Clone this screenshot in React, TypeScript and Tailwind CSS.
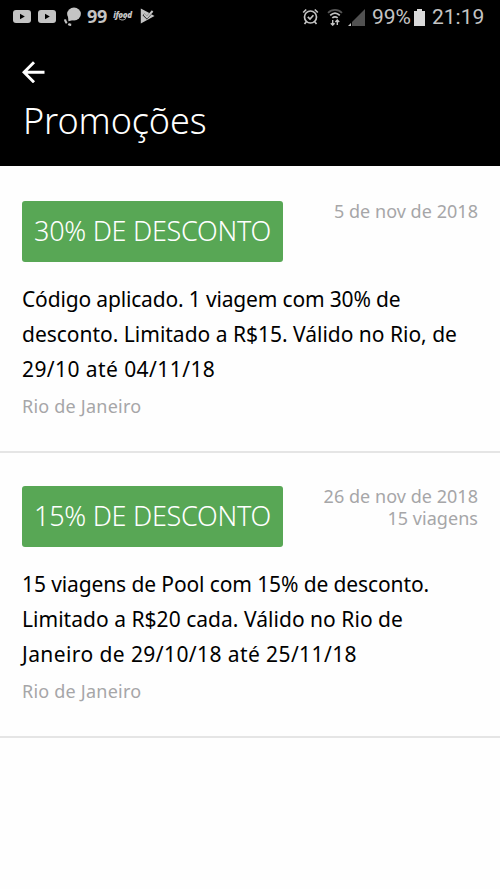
function PlayBadge() {
  return (
    <svg width="18" height="13" viewBox="0 0 18 13">
      <rect width="18" height="13" rx="3" fill="#c4c4c4" />
      <path d="M7 3.7v5.6l4.8-2.8z" fill="#000" />
    </svg>
  );
}

function StatusBar() {
  return (
    <div className="flex h-[34px] items-center pl-[13px] pr-[15px] text-[#c4c4c4]">
      <div className="flex items-center pb-[2px]">
        <PlayBadge />
        <span className="w-[7px]" />
        <PlayBadge />
        <svg className="ml-[8px]" width="17" height="19" viewBox="0 0 17 19">
          <ellipse cx="10" cy="7" rx="6.9" ry="6.5" fill="#c4c4c4" />
          <path d="M4 9l.4 5.300 6-1.500z" fill="#c4c4c4" />
          <path d="M1 12.400c.2 1.600.8 2.700 1.800 3.700M4.300 17c.9.500 1.800.8 2.900.9" fill="none" stroke="#c4c4c4" strokeWidth="2.200" />
        </svg>
        <span className="ml-[6px] w-[21px] text-[18px] leading-none font-bold tracking-[-0.4px]">99</span>
        <span className="ml-[5px] flex w-[19px] flex-col items-center">
          <span className="text-[8px] leading-[7px] font-black italic tracking-[-0.4px]">ifood</span>
          <svg width="9" height="3" viewBox="0 0 9 3">
            <path d="M1 .5c2 2 5 2 7-.3" fill="none" stroke="#c4c4c4" strokeWidth="1" />
          </svg>
        </span>
        <svg className="ml-[8px]" width="16" height="16" viewBox="0 0 16 16">
          <path d="M.8 .6v14.800l13.700-7.400-3-1.700-4.600 5.200L2.600 7.200l2-1.700 2.300 2.200 2.400-2.700z" fill="#c4c4c4" />
          <path d="M4 6.200l3 3L12.600 3" fill="none" stroke="#c4c4c4" strokeWidth="2" />
        </svg>
      </div>
      <div className="ml-auto flex items-center">
        <svg width="17" height="18" viewBox="0 0 17 18" fill="none" stroke="#c4c4c4" strokeWidth="1.700">
          <circle cx="8.500" cy="9" r="6" />
          <path d="M5.800 8.800l2.200 2.200 3.400-3.800M1.200 4.500l3-3M15.800 4.500l-3-3M4.500 13.500l-2 2.500M12.500 13.500l2 2.500" />
        </svg>
        <svg className="ml-[8px]" width="16" height="18" viewBox="0 0 16 18" fill="none" stroke="#c4c4c4" strokeWidth="1.700">
          <path d="M1 4.800c4-4 10-4 14 0" stroke="#555" />
          <path d="M3.200 7.300c3-2.800 6.600-2.800 9.600 0M5.300 9.900c1.800-1.500 3.600-1.500 5.400 0" />
          <path d="M5.700 12v5M3.800 15.200l1.900 1.900 1.900-1.900M10.300 17v-5M8.400 13.900l1.900-1.900 1.900 1.900" strokeWidth="1.400" />
        </svg>
        <svg className="ml-[5px]" width="17" height="17" viewBox="0 0 17 17">
          <path d="M17 0v17H4V13z" fill="#515151" />
          <path d="M3 14v3H0z" fill="#c4c4c4" />
        </svg>
        <span className="ml-[7px] w-[39px] whitespace-nowrap font-[Roboto] text-[21px] leading-none">99%</span>
        <svg className="ml-[3px]" width="11" height="17" viewBox="0 0 11 17">
          <path d="M3 0h5v2h3v15H0V2h3z" fill="#dadada" />
        </svg>
        <span className="ml-[7px] w-[53px] whitespace-nowrap font-[Roboto] text-[21px] leading-none">21:19</span>
      </div>
    </div>
  );
}

function Header() {
  return (
    <header className="h-[166px] bg-black text-white">
      <StatusBar />
      <button className="mt-[27px] ml-[22px] block" aria-label="Voltar">
        <svg width="23" height="22" viewBox="0 0 23 22" fill="none" stroke="#fff" strokeWidth="2.900">
          <path d="M22.500 11.300H2.500M12 1.300l-10 10 10 10" />
        </svg>
      </button>
      <h1 className="mt-[13px] ml-[23px] text-[36px] leading-[50px] font-light tracking-[-0.1px] whitespace-nowrap">
        Promoções
      </h1>
    </header>
  );
}

interface TextLine {
  text: string;
  tracking: string;
}

interface PromoProps {
  title: string;
  meta: string[];
  lines: TextLine[];
}

function Promo({ title, meta, lines }: PromoProps) {
  return (
    <article className="h-[285px] border-b-2 border-[#e5e5e5] px-[22px] pt-[33px]">
      <div className="flex justify-between">
        <div className="flex h-[61px] w-[261px] items-center rounded-[3px] bg-[#58a755] pl-[12px] text-[27px] font-light tracking-[-0.27px] whitespace-nowrap text-white">
          {title}
        </div>
        <div className="-mt-px text-right text-[18px] leading-[22px] tracking-[0.04px] text-[#a6a6a8]">
          {meta.map((m) => (
            <div key={m}>{m}</div>
          ))}
        </div>
      </div>
      <p className="mt-[20px] text-[21px] leading-[35px] text-black">
        {lines.map((l) => (
          <span key={l.text} className={`block whitespace-nowrap ${l.tracking}`}>
            {l.text}
          </span>
        ))}
      </p>
      <p className="mt-[7px] text-[18px] leading-[25px] tracking-[0.22px] text-[#a6a6a8]">Rio de Janeiro</p>
    </article>
  );
}

export default function App() {
  return (
    <main className="h-[889px] w-[500px] overflow-hidden bg-[#fefefe] font-['Noto_Sans',sans-serif]">
      <Header />
      <section className="pt-[2px]">
        <Promo
          title="30% DE DESCONTO"
          meta={["5 de nov de 2018"]}
          lines={[
            { text: "Código aplicado. 1 viagem com 30% de", tracking: "tracking-[-0.16px]" },
            { text: "desconto. Limitado a R$15. Válido no Rio, de", tracking: "tracking-[-0.01px]" },
            { text: "29/10 até 04/11/18", tracking: "tracking-[0.42px]" },
          ]}
        />
        <Promo
          title="15% DE DESCONTO"
          meta={["26 de nov de 2018", "15 viagens"]}
          lines={[
            { text: "15 viagens de Pool com 15% de desconto.", tracking: "tracking-[-0.11px]" },
            { text: "Limitado a R$20 cada. Válido no Rio de", tracking: "tracking-[0.03px]" },
            { text: "Janeiro de 29/10/18 até 25/11/18", tracking: "tracking-[0.41px]" },
          ]}
        />
      </section>
    </main>
  );
}
